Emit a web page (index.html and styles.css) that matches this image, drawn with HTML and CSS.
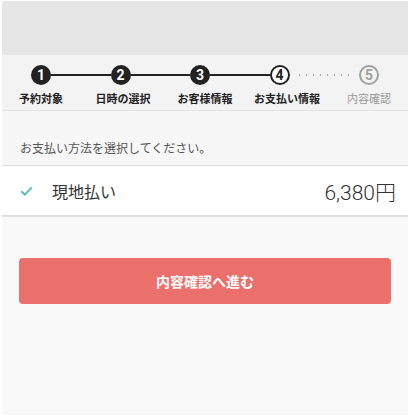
FILE: index.html
```html
<!DOCTYPE html>
<html lang="ja">
<head>
<meta charset="utf-8">
<link rel="stylesheet" href="styles.css">
</head>
<body>
<div class="frame">
  <div class="topbar"></div>
  <div class="stepper">
    <div class="track">
      <span class="dot done">1</span>
      <span class="line solid"></span>
      <span class="dot done">2</span>
      <span class="line solid"></span>
      <span class="dot done">3</span>
      <span class="line solid"></span>
      <span class="dot current">4</span>
      <span class="line dotted"></span>
      <span class="dot todo">5</span>
    </div>
    <div class="labels">
      <span class="label">予約対象</span>
      <span class="label">日時の選択</span>
      <span class="label">お客様情報</span>
      <span class="label">お支払い情報</span>
      <span class="label muted">内容確認</span>
    </div>
  </div>
  <div class="content">
    <p class="hint">お支払い方法を選択してください。</p>
    <div class="option">
      <svg class="check" width="13" height="10" viewBox="0 0 13 10"><path d="M1.2 5.2 L4.8 8.6 L11.8 1.4" fill="none" stroke="#5bbdb4" stroke-width="2"/></svg>
      <span class="option-name">現地払い</span>
      <span class="price">6,380円</span>
    </div>
    <div class="actions">
      <button class="primary">内容確認へ進む</button>
    </div>
  </div>
</div>
</body>
</html>
```
FILE: styles.css
```css
html, body {
  margin: 0;
  padding: 0;
  background: #ffffff;
}
body {
  font-family: "Noto Sans CJK JP", "Noto Sans", sans-serif;
  color: #333;
}
.frame {
  margin: 1px 2px 0 2px;
  height: 414px;
  display: flex;
  flex-direction: column;
  background: #fafafa;
}
.topbar {
  height: 54px;
  background: #e6e6e6;
}
.stepper {
  height: 56px;
  background: #f3f3f3;
  border-bottom: 1px solid #e2e2e2;
  box-sizing: border-box;
}
.track {
  display: flex;
  align-items: center;
  padding: 10px 29px 0 29px;
  height: 20px;
}
.dot {
  width: 20px;
  height: 20px;
  box-sizing: border-box;
  border-radius: 50%;
  display: flex;
  align-items: center;
  justify-content: center;
  font-family: "Roboto", "Noto Sans", sans-serif;
  font-weight: 700;
  font-size: 14px;
  line-height: 1;
  flex: none;
}
.dot.done {
  background: #222;
  color: #fff;
}
.dot.current {
  background: #fff;
  border: 2px solid #222;
  color: #222;
}
.dot.todo {
  background: transparent;
  border: 2px solid #a0a0a0;
  color: #a0a0a0;
}
.line {
  flex: 1;
}
.line.solid {
  height: 2px;
  background: #222;
}
.line.dotted {
  height: 2px;
  margin: 0 4px 0 6px;
  background-image: radial-gradient(circle, #a8a8a8 0.9px, transparent 1.1px);
  background-size: 7px 2px;
  background-repeat: repeat-x;
}
.labels {
  display: grid;
  grid-template-columns: repeat(5, 1fr);
  margin: 5px -2px 0 -2px;
}
.label {
  text-align: center;
  font-size: 11px;
  font-weight: 700;
  color: #222;
  line-height: 16px;
}
.label.muted {
  color: #9a9a9a;
  font-weight: 400;
}
.content {
  flex: 1;
  display: flex;
  flex-direction: column;
  background: #f7f7f7;
}
.hint {
  margin: 0;
  padding: 28px 0 0 18px;
  height: 26px;
  font-size: 12px;
  line-height: 18px;
  color: #555;
  border-bottom: 1px solid #dcdcdc;
}
.option {
  display: flex;
  align-items: center;
  height: 49px;
  background: #fff;
  border-bottom: 2px solid #dedede;
  padding: 0 12px 0 18px;
}
.check {
  margin-right: 19px;
  margin-top: 1px;
}
.option-name {
  font-size: 16px;
  color: #333;
}
.price {
  margin-left: auto;
  font-size: 21px;
  color: #333;
  font-family: "Roboto", "Noto Sans CJK JP", sans-serif;
  font-weight: 300;
}
.actions {
  flex: 1;
  padding: 41px 17px 0 17px;
  background: #f9f9f9;
}
.primary {
  display: block;
  width: 100%;
  height: 46px;
  border: none;
  border-radius: 4px;
  background: #eb706c;
  color: #fff;
  font-family: "Noto Sans CJK JP", sans-serif;
  font-size: 14px;
  font-weight: 700;
}
```
